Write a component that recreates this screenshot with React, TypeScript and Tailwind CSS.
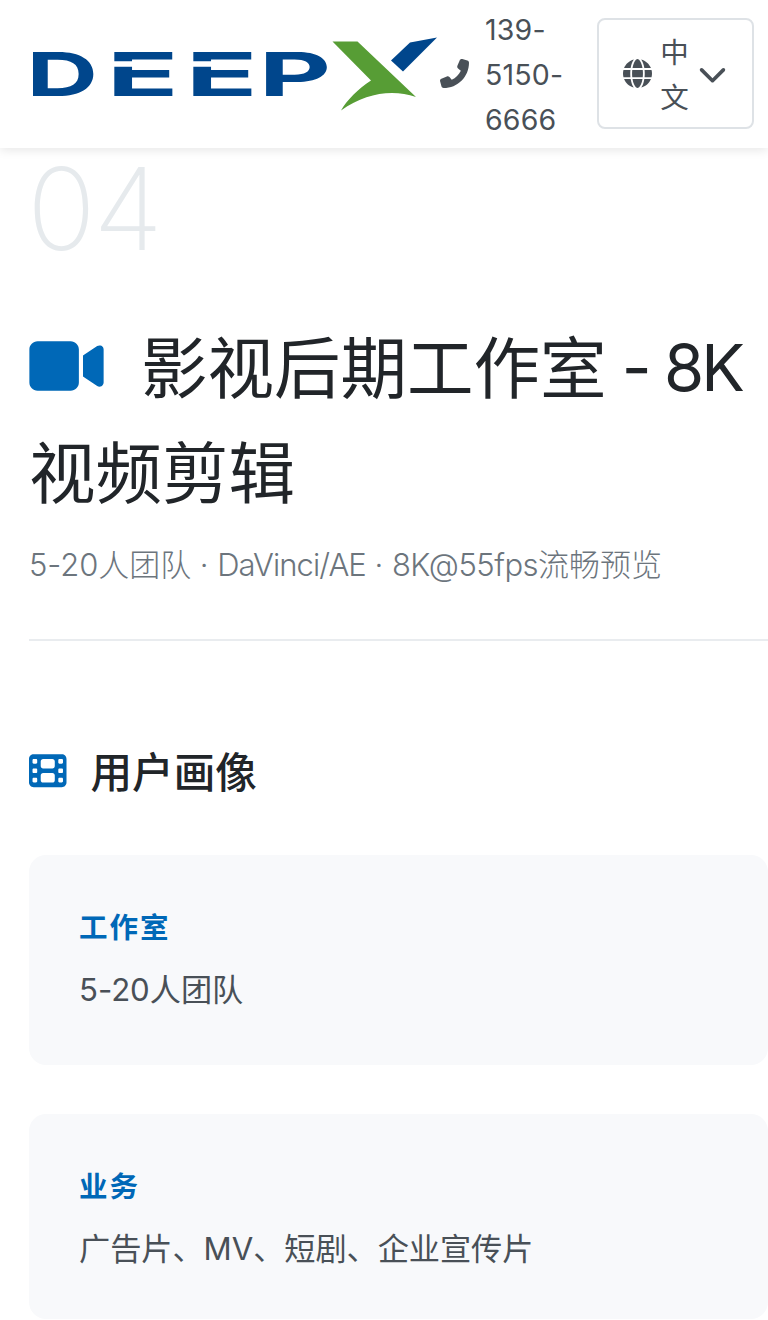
import {
  FaChevronDown,
  FaFilm,
  FaGlobe,
  FaPhoneFlip,
  FaVideo,
} from "react-icons/fa6";

const profile = [
  { label: "工作室", value: "5-20人团队", height: "h-[210px]" },
  { label: "业务", value: "广告片、MV、短剧、企业宣传片", height: "h-[205px]" },
];

// every letter of the wordmark is stretched by its own factor
const wordmark = [
  { letter: "D", x: -5.6, stretch: 1.62 },
  { letter: "E", x: 74.4, stretch: 1.95 },
  { letter: "E", x: 153.4, stretch: 1.95 },
  { letter: "P", x: 226.7, stretch: 1.83 },
];

function Logo() {
  return (
    <svg
      viewBox="0 0 406 74"
      className="ml-8 h-[74px] w-[406px] shrink-0 overflow-visible"
      role="img"
      aria-label="DEEPX"
    >
      {wordmark.map(({ letter, x, stretch }) => (
        <text
          key={x}
          transform={`translate(${x} 59) scale(${stretch} 1)`}
          className="fill-[#00468c] font-['Inter',sans-serif] text-[61px] font-bold"
        >
          {letter}
        </text>
      ))}
      {/* slits under the top bars of both E's */}
      <path d="M80 27h62M159 27h62" stroke="#fff" strokeWidth="5.500" />
      <path
        d="M300.500 4.500H325.500L384 60C360 52 334 56 309 73.500C315 63 326 52 339 43.500Z"
        fill="#579d35"
      />
      <path d="M359 23.500L378 5.500L405 0.500L371 34.500Z" fill="#00468c" />
    </svg>
  );
}

function Header() {
  return (
    <header className="flex h-[148px] items-center bg-white text-[#495057] shadow-[0_2px_10px_rgba(0,0,0,0.1)]">
      <Logo />
      <FaPhoneFlip className="mb-px ml-0.5 size-[29px] shrink-0" />
      <span className="ml-4 w-[85px] text-[28.500px] leading-[45px] tracking-[0.200px]">
        139-
        <br />
        5150-
        <br />
        6666
      </span>
      <button className="mb-px ml-[27px] flex h-[111px] w-[157px] shrink-0 items-center rounded-[8px] border-2 border-[#dee2e6] pl-6">
        <FaGlobe className="size-[29px] shrink-0" />
        <span className="ml-2 w-[29px] pt-0.5 text-[28.500px] leading-[45px]">
          中<br />文
        </span>
        <FaChevronDown className="ml-[9px] size-[29px] shrink-0" />
      </button>
    </header>
  );
}

export default function App() {
  return (
    <div className="h-[1320px] w-full overflow-hidden bg-white font-['Inter','Noto_Sans_CJK_SC',sans-serif] text-[#212529]">
      <Header />
      <main className="pl-[29px]">
        <div className="-ml-0.5 pt-[3px] text-[114px] leading-[116px] font-[240] tracking-[-2.500px] text-[#e6eaed]">
          04
        </div>
        <h1 className="mt-[50px] text-[66.500px] leading-[104px] font-normal">
          <FaVideo className="mr-[37px] inline h-[66px] w-[75px] align-[-6px] text-[#0068b7]" />
          影视后期工作室
          <span className="relative -top-0.5 text-[65px] tracking-[-3px]">
            {" "}
            - 8K
          </span>
          <br />
          视频剪辑
        </h1>
        <p className="mt-3.5 text-[31px] leading-[50px] font-light tracking-[-0.050px] text-[#6c757d]">
          5-20人团队 ·{" "}
          <span className="tracking-[-0.950px]">DaVinci/AE</span> ·{" "}
          <span className="tracking-[-0.500px]">8K@55fps</span>流畅预览
        </p>
        <hr className="mt-[49px] border-t-2 border-[#e9ecef]" />

        <h2 className="mt-[107px] flex items-center text-[41.600px] leading-[50px] font-medium">
          <FaFilm className="mr-6 mb-1 size-[37.500px] text-[#0068b7]" />
          用户画像
        </h2>
        <div className="mt-[57px] flex flex-col gap-[49px]">
          {profile.map((item) => (
            <div
              key={item.label}
              className={`rounded-[17px] bg-[#f8f9fb] pt-[50px] pl-[50px] ${item.height}`}
            >
              <div className="text-[28.500px] leading-[45px] font-semibold tracking-[2px] text-[#0068b7]">
                {item.label}
              </div>
              <div className="mt-[15px] text-[31.200px] leading-[50px] font-[370] tracking-[-0.050px] text-[#495057]">
                {item.value}
              </div>
            </div>
          ))}
        </div>
      </main>
    </div>
  );
}
